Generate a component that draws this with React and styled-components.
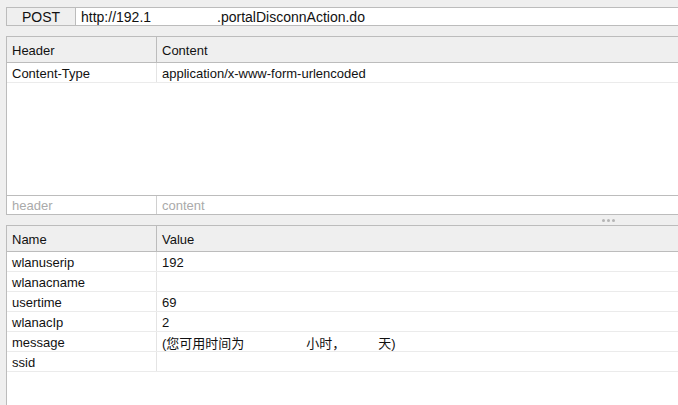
import React from 'react'
import styled, { createGlobalStyle } from 'styled-components'

const GlobalStyle = createGlobalStyle`
  html, body {
    margin: 0;
    padding: 0;
    height: 100%;
    overflow: hidden;
    background: #efefef;
  }
  #root {
    height: 100%;
  }
`

const Page = styled.div`
  height: 100%;
  display: flex;
  flex-direction: column;
  padding: 7px 0 0 6px;
  box-sizing: border-box;
  font-family: "Liberation Sans", Arial, "Noto Sans CJK SC", sans-serif;
  font-size: 13px;
  color: #111;
  overflow: hidden;
`

const UrlBar = styled.div`
  display: flex;
  height: 20px;
  box-sizing: border-box;
  border: 1px solid #bcbcbc;
  margin-right: -20px;
  background: #fff;
`

const Method = styled.div`
  width: 68px;
  border-right: 1px solid #bcbcbc;
  background: #efefef;
  display: flex;
  align-items: center;
  justify-content: center;
  font-size: 14px;
  color: #111;
`

const Url = styled.div`
  flex: 1;
  display: flex;
  align-items: center;
  padding-left: 5px;
  font-size: 14px;
  white-space: nowrap;
`

const Masked = styled.span`
  display: inline-block;
  width: ${p => p.$w}px;
`

const Panel = styled.div`
  margin-top: ${p => p.$top || 0}px;
  margin-right: -20px;
  border: 1px solid #bcbcbc;
  border-right: none;
  background: #fff;
  display: flex;
  flex-direction: column;
  height: ${p => (p.$h ? `${p.$h}px` : 'auto')};
  flex: ${p => (p.$grow ? 1 : 'none')};
  box-sizing: border-box;
  ${p => p.$grow && 'min-height: 200px; margin-bottom: -20px;'}
`

const Row = styled.div`
  display: grid;
  grid-template-columns: 150px 1fr;
  height: ${p => p.$h || 20}px;
  box-sizing: border-box;
  border-bottom: 1px solid ${p => p.$line || '#ebebeb'};
  background: ${p => p.$bg || '#fff'};
  color: ${p => p.$muted ? '#aaa' : '#111'};
  flex: none;
`

const Cell = styled.div`
  display: flex;
  align-items: center;
  padding: 1px 0 0 5px;
  white-space: nowrap;
  overflow: hidden;
  border-right: ${p => (p.$first ? `1px solid ${p.$line || '#e4e4e4'}` : 'none')};
`

const Filler = styled.div`
  flex: 1;
`

const PlaceholderRow = styled(Row)`
  border-bottom: none;
  border-top: 1px solid #bcbcbc;
  height: 19px;
`

const Splitter = styled.div`
  height: 10px;
  flex: none;
  display: flex;
  align-items: center;
  gap: 1px;
  padding-left: 596px;
`

const Dot = styled.span`
  width: 3px;
  height: 3px;
  border-radius: 50%;
  background: #b4b4b4;
  margin-right: 1px;
`

const Gap = styled.span`
  display: inline-block;
  width: ${p => p.$w}px;
`

function HeadRow({ a, b }) {
  return (
    <Row $h={26} $bg="#efefef" $line="#bcbcbc">
      <Cell $first $line="#bcbcbc">{a}</Cell>
      <Cell>{b}</Cell>
    </Row>
  )
}

function DataRow({ name, children }) {
  return (
    <Row>
      <Cell $first>{name}</Cell>
      <Cell>{children}</Cell>
    </Row>
  )
}

export default function App() {
  return (
    <>
      <GlobalStyle />
      <Page>
        <UrlBar>
          <Method>POST</Method>
          <Url>
            http://192.1<Masked $w={66} />.portalDisconnAction.do
          </Url>
        </UrlBar>

        <Panel $top={10} $h={179}>
          <HeadRow a="Header" b="Content" />
          <DataRow name="Content-Type">application/x-www-form-urlencoded</DataRow>
          <Filler />
          <PlaceholderRow $muted>
            <Cell $first $line="#d0d0d0">header</Cell>
            <Cell>content</Cell>
          </PlaceholderRow>
        </Panel>

        <Splitter>
          <Dot />
          <Dot />
          <Dot />
        </Splitter>

        <Panel $grow>
          <HeadRow a="Name" b="Value" />
          <DataRow name="wlanuserip">192</DataRow>
          <DataRow name="wlanacname" />
          <DataRow name="usertime">69</DataRow>
          <DataRow name="wlanacIp">2</DataRow>
          <DataRow name="message">
            (您可用时间为<Gap $w={62} />小时，<Gap $w={33} />天)
          </DataRow>
          <DataRow name="ssid" />
          <Filler />
        </Panel>
      </Page>
    </>
  )
}
